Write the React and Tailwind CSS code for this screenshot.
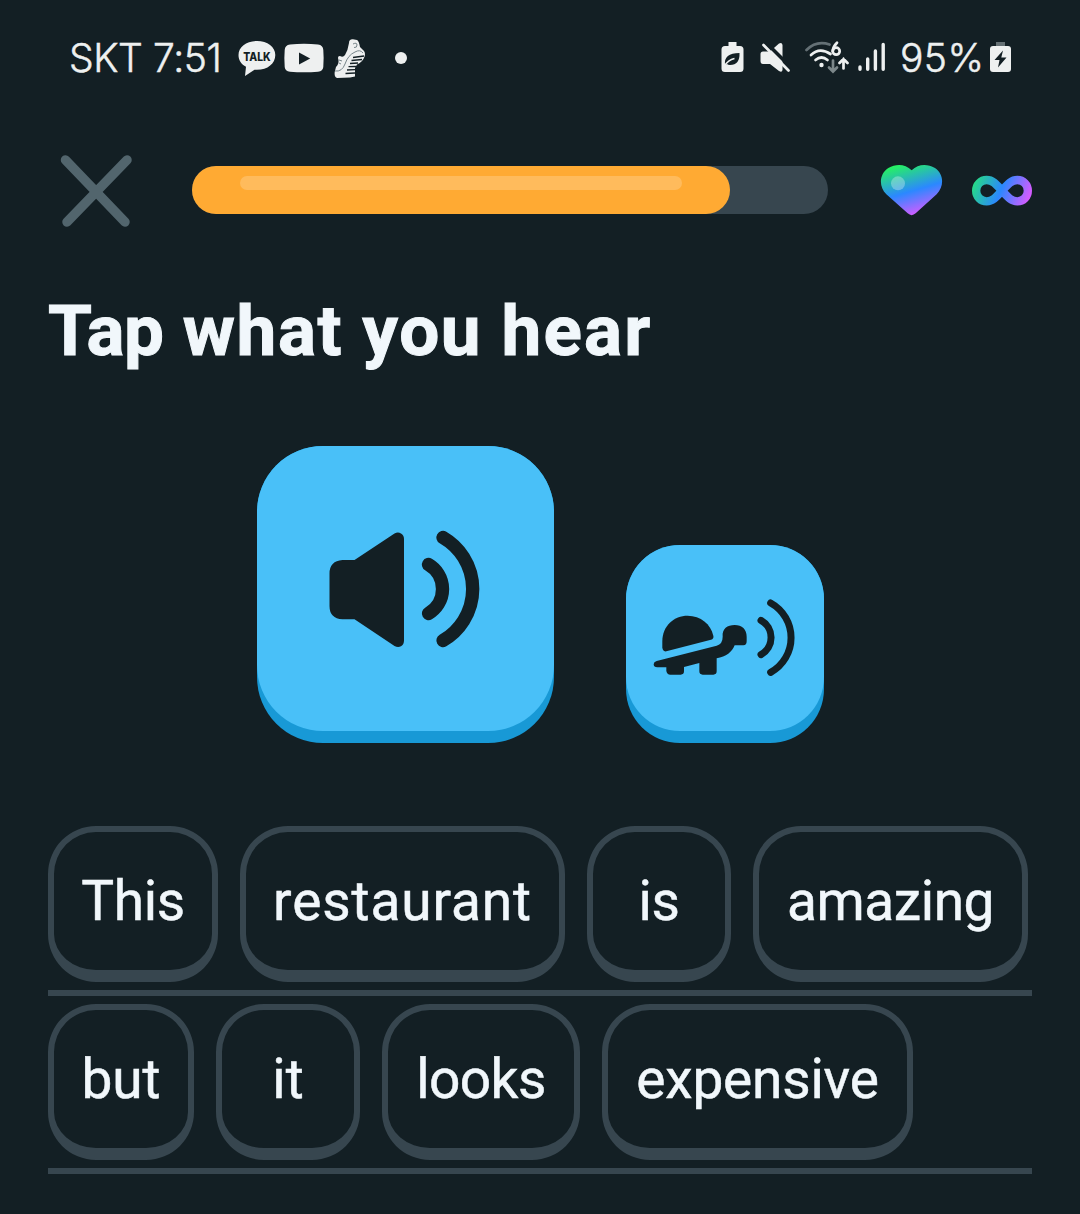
import React from 'react';

const answerRows = [
    [
        {text: 'This', className: 'w-[170px] tracking-[-0.3px]'},
        {text: 'restaurant', className: 'w-[325px] tracking-[0.9px]'},
        {text: 'is', className: 'w-[144px] tracking-[-0.5px]'},
        {text: 'amazing', className: 'w-[275px] tracking-[-0.4px]'},
    ],
    [
        {text: 'but', className: 'w-[146px] tracking-[0px]'},
        {text: 'it', className: 'w-[144px] tracking-[0px]'},
        {text: 'looks', className: 'w-[198px] tracking-[-0.6px]'},
        {text: 'expensive', className: 'w-[311px] tracking-[-0.2px]'},
    ],
];

function TalkIcon() {
    return (
        <svg className="h-10 w-[38px]" viewBox="0 0 38 40">
            <path
                d="M19 3C8.500 3 .5 9 .5 17c0 5.500 3 9.300 7.500 11.800L7 38l9.500-6.300c12 1 20.800-5.500 20.800-14.700C37.300 9 29.500 3 19 3Z"
                fill="#eef0f0"
            />
            <text x="19" y="23" textAnchor="middle" fontFamily="Inter, sans-serif" fontSize="11.500" fontWeight="800"
                  textLength="27.500" lengthAdjust="spacingAndGlyphs" fill="#131f24">TALK</text>
        </svg>
    );
}

function VideoIcon() {
    return (
        <svg className="ml-2 h-10 w-10" viewBox="0 0 40 40">
            <path d="M6 6.500Q20 5 34 6.500Q39 7 39.300 12Q40 20 39.300 29Q39 33 34 33.700Q20 35 6 33.700Q1 33 .7 29Q0 20 .7 12Q1 7 6 6.500Z" fill="#eef0f0"/>
            <path d="M15 14.500v12L26.200 20.500Z" fill="#131f24"/>
        </svg>
    );
}

function ShoeIcon() {
    return (
        <svg className="ml-[10px] h-10 w-8" viewBox="0 0 32 40">
            <path
                d="M15 5Q15 1 19 1.300L23 2Q25 3 26 9L30 13Q32 16 30 20Q28 24 23 26.500L21 30V38.500L16 39.500L3 40Q0 39 .7 34L2 29Q5 26 4.500 22Q3 18 6 18Q9 20 11 17Q14 12 15 5Z"
                fill="#eef0f0"
            />
            <path d="M1 33Q8 34 11 26Q14 17 21 14Q26 11 29 15M19 6q4-2 4 1q0 3-3 2.500M5 22l3 1M5 25l2 1" fill="none" stroke="#77858a" strokeWidth="1"/>
            <path d="M19 19.500L30 18M17.500 22.500L28 21.500M16 25.500L24 25M14.500 28.700L22 28.500M13 32L21 31.700M11.500 35.500L21 35"
                  stroke="#131f24" strokeWidth="1.300"/>
        </svg>
    );
}

function SaverBatteryIcon() {
    return (
        <svg className="h-10 w-[23px]" viewBox="0 0 23 40">
            <path d="M7.500 4h8v4H19q3.500 0 3.500 3.500v19Q22.500 34 19 34H4Q.5 34 .5 30.500v-19Q.5 8 4 8h3.500Z" fill="#eef0f0"/>
            <path d="M4 27Q2.500 15 18.500 15Q19 27 9 27Q7 27 6 26Z" fill="#131f24"/>
            <path d="M3.500 28Q7 22 13.500 20.500" fill="none" stroke="#eef0f0" strokeWidth="1.500"/>
        </svg>
    );
}

function MuteIcon() {
    return (
        <svg className="ml-4 h-10 w-[31px]" viewBox="0 0 31 40">
            <path d="M3 13.500h7L19 5.500Q22 4 22.500 7v25q-.5 3-3.500 1L10 26H3Q.5 26 .5 23v-7Q.5 13.500 3 13.500Z" fill="#eef0f0"/>
            <path d="M5.500 4L31 29.500" stroke="#131f24" strokeWidth="3.500"/>
            <path d="M3.500 7L28.500 32.500" stroke="#eef0f0" strokeWidth="2.700" strokeLinecap="round"/>
        </svg>
    );
}

function WifiIcon() {
    return (
        <svg className="ml-[14px] h-10 w-11" viewBox="0.5 -0.5 44 40" fill="none" stroke="#eef0f0" strokeWidth="2.700"
             strokeLinecap="round">
            <path d="M2 11.500Q12 1.500 25 6" stroke="#647075"/>
            <path d="M6.500 16.500Q15 8.500 26 15.500M11 21.500Q17 16.500 23 21.500"/>
            <circle cx="17" cy="26.500" r="2.200" fill="#eef0f0" stroke="none"/>
            <path d="M32.500 4.200Q28.500 8 28.200 12.500"/>
            <circle cx="31.700" cy="12.700" r="3.500"/>
            <path d="M28.500 22v10.500m-4-3.500l4 4l4-4" stroke="#7c878a"/>
            <path d="M39 30V20.500m-4 4l4-4l4 4"/>
        </svg>
    );
}

function SignalIcon() {
    return (
        <svg className="ml-[9px] h-10 w-7" viewBox="0 -2 28 40" stroke="#eef0f0" strokeWidth="3.400" strokeLinecap="round">
            <path d="M2 27v2.200M9.700 19v10.200M17.400 11V29.200M25.200 4.500V29.200"/>
        </svg>
    );
}

function ChargingIcon() {
    return (
        <svg className="ml-2 h-10 w-[22px]" viewBox="0.5 0.5 22 40">
            <path d="M6.500 4.500h9V9h-9z" fill="#657074"/>
            <path d="M3.500 8.500h15Q21.500 8.500 21.500 11.500v20q0 3-3 3h-15q-3 0-3-3v-20q0-3 3-3Z" fill="#eef0f0"/>
            <path d="M13.500 13L5 22.500h5L8.500 30L17 20h-5.200Z" fill="#131f24"/>
        </svg>
    );
}

function StatusBar() {
    return (
        <div className="flex h-[118px] items-start justify-between pt-[38px] pr-[68px] pl-[69px] text-[#eef0f0]">
            <div className="flex h-10 items-center">
                <span className="w-[169px] font-[Inter,sans-serif] text-[39px] leading-10 font-light tracking-[-0.4px] whitespace-nowrap [-webkit-text-stroke:0.5px]">
                    SKT 7:51
                </span>
                <TalkIcon/>
                <VideoIcon/>
                <ShoeIcon/>
                <span className="ml-[29px] h-3 w-3 rounded-full bg-[#eef0f0]"/>
            </div>
            <div className="flex h-10 items-center">
                <SaverBatteryIcon/>
                <MuteIcon/>
                <WifiIcon/>
                <SignalIcon/>
                <span className="ml-[14px] w-[82px] font-[Inter,sans-serif] text-[39px] leading-10 font-light tracking-[0.4px] whitespace-nowrap [-webkit-text-stroke:0.5px]">
                    95%
                </span>
                <ChargingIcon/>
            </div>
        </div>
    );
}

function Hearts() {
    return (
        <svg className="ml-[52px] h-[54px] w-[154px]" viewBox="60 38 462 162">
            <defs>
                <linearGradient id="heart" gradientUnits="userSpaceOnUse" x1="118" y1="42" x2="163" y2="195">
                    <stop offset="0" stopColor="#26f360"/>
                    <stop offset="0.55" stopColor="#2b88ff"/>
                    <stop offset="1" stopColor="#d35cff"/>
                </linearGradient>
                <linearGradient id="infinity" gradientUnits="userSpaceOnUse" x1="345" y1="82" x2="505" y2="145">
                    <stop offset="0" stopColor="#26dc83"/>
                    <stop offset="0.5" stopColor="#2b88ff"/>
                    <stop offset="1" stopColor="#d35cff"/>
                </linearGradient>
            </defs>
            <path
                d="M155 60C135 40 108 40 85 53C58 71 55 108 79 132L143 189Q155 200 167 189L230 132C253 108 252 71 225 53C202 40 175 40 155 60Z"
                fill="url(#heart)"
            />
            <circle cx="114" cy="99" r="21" fill="#fff" opacity="0.3"/>
            <path
                d="M426 121C408 101 398 89 380 89C362 89 348.500 103 348.500 121C348.500 139 362 153 380 153C398 153 408 141 426 121C444 101 454 89 472 89C490 89 503.500 103 503.500 121C503.500 139 490 153 472 153C454 153 444 141 426 121Z"
                fill="none" stroke="url(#infinity)" strokeWidth="25"
            />
        </svg>
    );
}

function LessonHeader() {
    return (
        <div className="flex h-[144px] items-center pl-[60px]">
            <button className="h-[72px] w-[72px]" aria-label="Close">
                <svg className="overflow-visible" viewBox="60 154 72 72" fill="none" stroke="#52656d" strokeWidth="9.500"
                     strokeLinecap="round">
                    <path d="M65.500 160L125 222M127 160L67 222"/>
                </svg>
            </button>
            <div className="ml-[60px] h-12 w-[636px] rounded-full bg-[#37464f]">
                <div className="h-12 w-[538px] rounded-full bg-[#ffaa33] px-12 pt-[10px]">
                    <div className="h-[14px] rounded-full bg-[#ffbb5c]"/>
                </div>
            </div>
            <Hearts/>
        </div>
    );
}

function SpeakerButton() {
    return (
        <button className="h-[297px] w-[297px] rounded-[66px] bg-[#1899d6] pb-3">
            <span className="block h-[285px] rounded-[66px] bg-[#49c0f8]">
                <svg className="h-[285px] w-[297px]" viewBox="257 446 297 285" fill="#131f24">
                    <path d="M342.500 560H354.500L394.500 533.500Q398 531.500 401 533.500Q404 535 404 539V640.500Q404 644.500 401 646.300Q398 648 394.500 646L354.500 619.300H342.500Q329.500 618.500 329.500 606V573.500Q329.500 561 342.500 560Z"/>
                    <path d="M428.500 564.500A28.400 28.400 0 0 1 428.500 613.500M443 537.500A59.500 59.500 0 0 1 443 640.500"
                          fill="none" stroke="#131f24" strokeWidth="13.300" strokeLinecap="round"/>
                </svg>
            </span>
        </button>
    );
}

function SlowButton() {
    return (
        <button className="h-[198px] w-[198px] rounded-[54px] bg-[#1899d6] pb-3">
            <span className="block h-[186px] rounded-[54px] bg-[#49c0f8]">
                <svg className="h-[186px] w-[198px]" viewBox="18 15 594 558" fill="#131f24">
                    <path d="M139 334Q128 336 127 322V303C127 258 162 227 203 227C242 227 272 252 280 287Q282 296 273 299Z"/>
                    <path d="M110 363L290 317Q308 312 308 290C306 266 322 255 344 255C366 255 380 268 380 290V304Q380 316 370 316H344C337 335 318 351 290 355V394Q290 404 280 404H248Q238 404 238 394V369L192 381V394Q192 404 182 404H151Q141 404 139 393V382H112Q101 382 101 373Q101 366 110 363Z"/>
                    <path d="M423 241A59 59 0 0 1 423 344M452 189A119 119 0 0 1 452 397"
                          fill="none" stroke="#131f24" strokeWidth="21" strokeLinecap="round"/>
                </svg>
            </span>
        </button>
    );
}

function WordTile({word}) {
    return (
        <button
            className={`${word.className} flex h-[156px] items-center justify-center rounded-[48px] border-[6px] border-b-[12px] border-[#37464f] text-[55px] leading-none whitespace-nowrap [-webkit-text-stroke:0.5px]`}
        >
            {word.text}
        </button>
    );
}

export default function App() {
    return (
        <div className="h-[1214px] w-[1080px] overflow-hidden bg-[#131f24] font-[Roboto,sans-serif] text-[#f1f7fb]">
            <StatusBar/>
            <LessonHeader/>
            <h1 className="h-[184px] pt-8 pl-12 text-[71px] leading-[74px] font-bold tracking-[1.6px] whitespace-nowrap [-webkit-text-stroke:1px]">
                <span className="tracking-[-0.4px]">Tap</span> what you <span className="tracking-[2.2px]">hear</span>
            </h1>
            <div className="flex h-[297px] items-end justify-center gap-[72px]">
                <SpeakerButton/>
                <SlowButton/>
            </div>
            <div className="px-12 pt-[75px]">
                {answerRows.map((row, i) => (
                    <div key={i} className="flex h-[178px] gap-[22px] border-b-[6px] border-[#37464f] pt-2">
                        {row.map((word) => <WordTile key={word.text} word={word}/>)}
                    </div>
                ))}
            </div>
        </div>
    );
}
